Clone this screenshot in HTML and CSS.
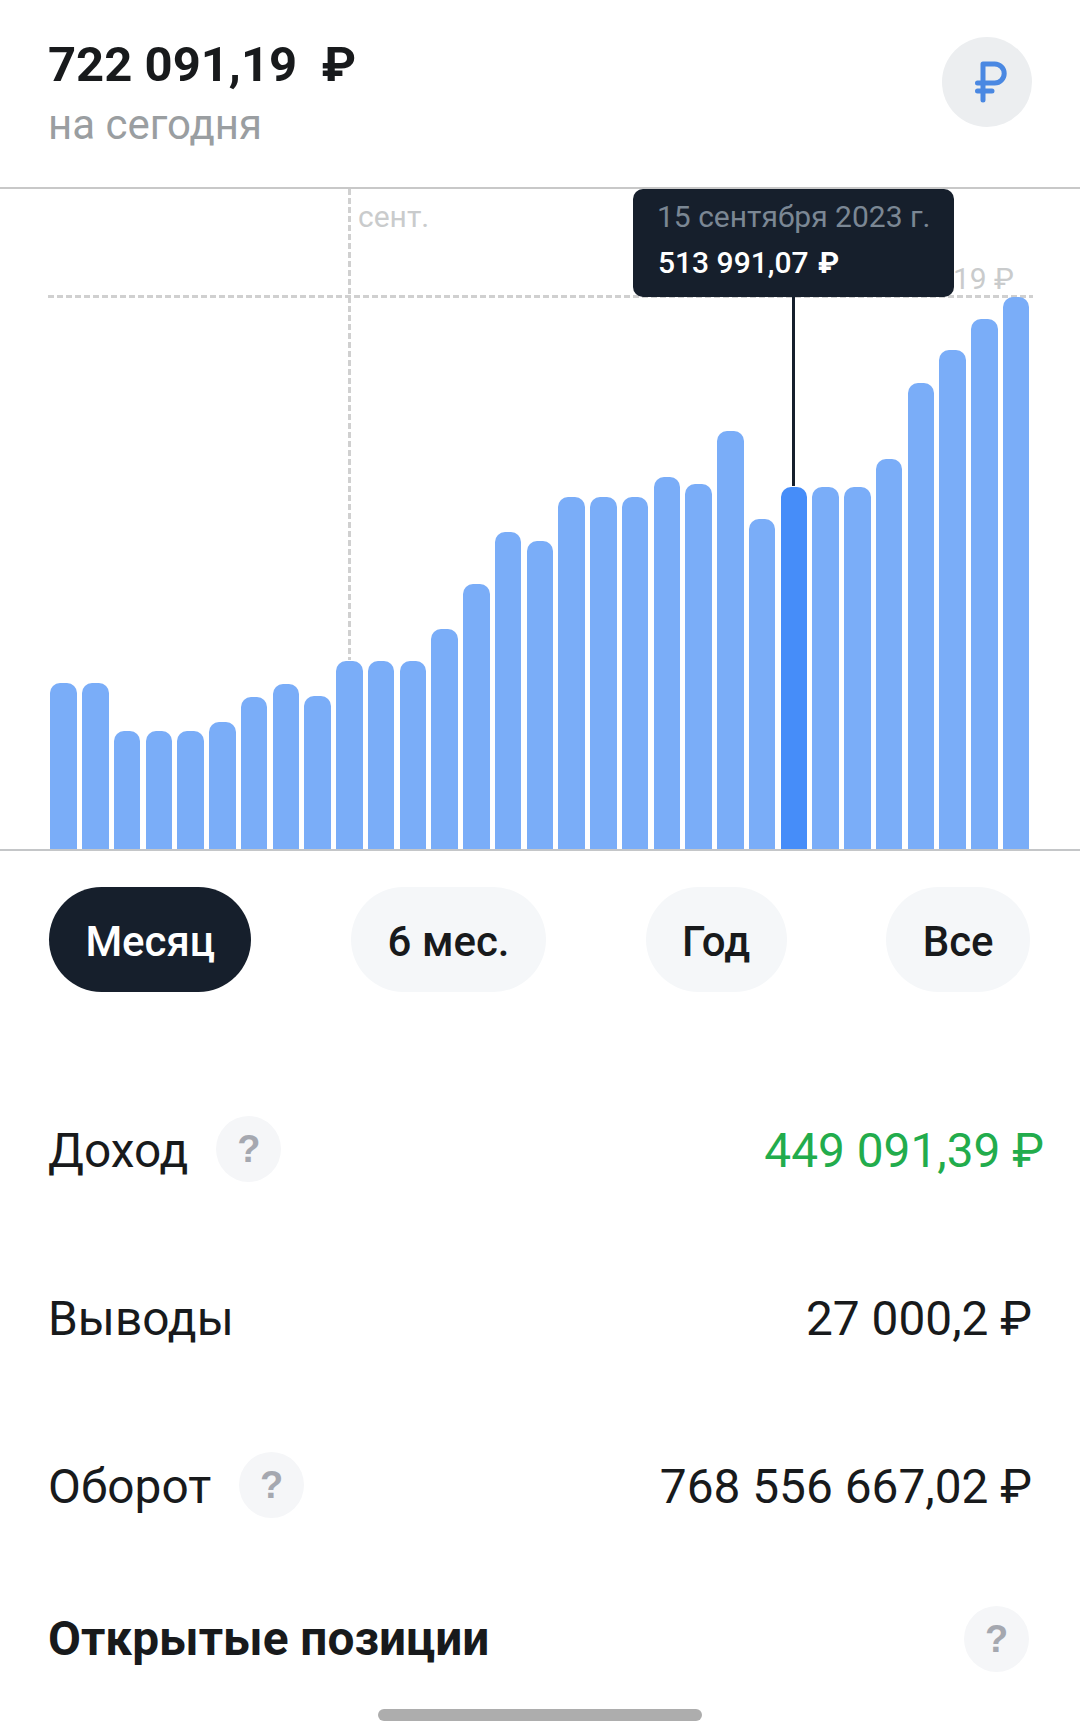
FILE: index.html
```html
<!DOCTYPE html>
<html lang="ru">
<head>
<meta charset="utf-8">
<title>Баланс</title>
<link rel="stylesheet" href="styles.css">
</head>
<body>
<main class="page">
  <header class="head">
    <div class="head-text">
      <div class="total">722 091,19&nbsp; ₽</div>
      <div class="today">на сегодня</div>
    </div>
    <div class="currency">
      <svg class="currency-icon" viewBox="0 0 90 90" width="90" height="90" aria-hidden="true"><path d="M41 63V27H52.7a9.5 9.5 0 0 1 0 19H35.5M35.5 54H50"/></svg>
    </div>
  </header>

  <section class="chart">
    <div class="max-line"></div>
    <div class="max-label">722 091,19 ₽</div>
    <div class="month-line"></div>
    <div class="month-label">сент.</div>
    <div class="pointer"></div>
    <div class="tip">
      <div class="tip-date">15 сентября 2023 г.</div>
      <div class="tip-value">513 991,07 <span class="tip-rub">₽</span></div>
    </div>
    <div class="bars">
      <div class="bar" style="height:166px"></div>
      <div class="bar" style="height:166px"></div>
      <div class="bar" style="height:118px"></div>
      <div class="bar" style="height:118px"></div>
      <div class="bar" style="height:118px"></div>
      <div class="bar" style="height:127px"></div>
      <div class="bar" style="height:152px"></div>
      <div class="bar" style="height:165px"></div>
      <div class="bar" style="height:153px"></div>
      <div class="bar" style="height:188px"></div>
      <div class="bar" style="height:188px"></div>
      <div class="bar" style="height:188px"></div>
      <div class="bar" style="height:220px"></div>
      <div class="bar" style="height:265px"></div>
      <div class="bar" style="height:317px"></div>
      <div class="bar" style="height:308px"></div>
      <div class="bar" style="height:352px"></div>
      <div class="bar" style="height:352px"></div>
      <div class="bar" style="height:352px"></div>
      <div class="bar" style="height:372px"></div>
      <div class="bar" style="height:365px"></div>
      <div class="bar" style="height:418px"></div>
      <div class="bar" style="height:330px"></div>
      <div class="bar bar-active" style="height:362px"></div>
      <div class="bar" style="height:362px"></div>
      <div class="bar" style="height:362px"></div>
      <div class="bar" style="height:390px"></div>
      <div class="bar" style="height:466px"></div>
      <div class="bar" style="height:499px"></div>
      <div class="bar" style="height:530px"></div>
      <div class="bar" style="height:552px"></div>
    </div>
  </section>

  <nav class="periods">
    <button class="pill pill-active">Месяц</button>
    <button class="pill">6 мес.</button>
    <button class="pill">Год</button>
    <button class="pill">Все</button>
  </nav>

  <section class="stats">
    <div class="row">
      <div class="label">Доход <span class="help help-inline">?</span></div>
      <div class="value value-up">449 091,39 ₽</div>
    </div>
    <div class="row">
      <div class="label">Выводы</div>
      <div class="value">27 000,2 ₽</div>
    </div>
    <div class="row">
      <div class="label">Оборот <span class="help help-inline">?</span></div>
      <div class="value">768 556 667,02 ₽</div>
    </div>
    <div class="row row-title">
      <h2 class="title">Открытые позиции</h2>
      <span class="help">?</span>
    </div>
  </section>

  <div class="grabber"></div>
</main>
</body>
</html>
```
FILE: styles.css
```css
* { box-sizing: border-box; }
html, body { margin: 0; padding: 0; background: #fff; }
body { font-family: Roboto, "Liberation Sans", sans-serif; color: #181a1c; }
.page { position: relative; width: 1080px; height: 1736px; overflow: hidden; }

.head {
  height: 187px;
  padding: 37px 48px 0 48px;
  display: flex;
  justify-content: space-between;
  align-items: flex-start;
}
.total { font-size: 49px; font-weight: 700; line-height: 56px; white-space: nowrap; }
.today { font-size: 42px; color: #9a9ea1; line-height: 50px; margin-top: 7px; }
.currency { width: 90px; height: 90px; border-radius: 50%; background: #eceef0; }
.currency-icon { display: block; fill: none; stroke: #4a88e2; stroke-width: 5; stroke-linecap: round; stroke-linejoin: round; }

.chart {
  position: relative;
  height: 664px;
  border-top: 2px solid #c8c8c8;
  border-bottom: 2px solid #c4c6c8;
  padding-left: 50.4px;
  display: flex;
  align-items: flex-end;
}
.bars { display: flex; align-items: flex-end; gap: 5.25px; position: relative; }
.bar { width: 26.5px; background: #7aadf8; border-radius: 10px 10px 0 0; }
.bar-active { background: #468df9; }

.max-line {
  position: absolute; left: 48px; width: 985px; top: 106px; height: 3px;
  background: repeating-linear-gradient(90deg, #d0d0d0 0 6px, transparent 6px 9px);
}
.max-label { position: absolute; right: 66px; top: 73px; font-size: 30px; line-height: 34px; color: #c9cbcc; white-space: nowrap; }
.month-line {
  position: absolute; left: 348px; top: 0; height: 471px; width: 3px;
  background: repeating-linear-gradient(180deg, #d0d0d0 0 6px, transparent 6px 9px);
}
.month-label { position: absolute; left: 358px; top: 11px; font-size: 30px; line-height: 34px; color: #c9cbcc; }
.pointer { position: absolute; left: 792px; top: 107px; height: 190px; width: 3px; background: #161f2c; z-index: 2; }
.tip {
  position: absolute;
  left: 633px; top: 0;
  width: 321px; height: 108px;
  padding: 10px 0 0 25px;
  background: #161f2c;
  border-radius: 10px;
  z-index: 3;
}
.tip-date { font-size: 30px; line-height: 36px; color: #7b8794; white-space: nowrap; margin-left: -1px; }
.tip-value { font-size: 30px; line-height: 36px; font-weight: 500; color: #fff; margin-top: 10px; white-space: nowrap; }
.tip-rub { font-weight: 700; margin-left: 2px; }

.periods {
  display: flex;
  justify-content: space-between;
  padding: 36px 50px 0 49px;
}
.pill {
  height: 105px;
  padding: 3px 36.4px 0;
  border: 0;
  border-radius: 53px;
  background: #f5f7f9;
  color: #181a1c;
  font-family: inherit;
  font-size: 42px;
  font-weight: 500;
}
.pill-active { background: #161f2c; color: #fff; }

.stats { padding: 75px 48px 0 48px; }
.row {
  height: 168px;
  display: flex;
  justify-content: space-between;
  align-items: center;
}
.label { font-size: 47.8px; display: flex; align-items: center; gap: 28px; }
.value { font-size: 47.8px; white-space: nowrap; }
.value-up { color: #22ac4c; margin-right: -12px; }
.row-title { margin-top: -16px; padding-right: 3px; }
.title { margin: 0; font-size: 47.8px; font-weight: 700; }
.help {
  width: 65px; height: 66px;
  border-radius: 50%;
  background: #f5f6f8;
  color: #a5a8b0;
  font-family: "Liberation Sans", Arial, sans-serif;
  font-size: 38px;
  font-weight: 700;
  display: flex;
  align-items: center;
  justify-content: center;
}
.help-inline { margin-top: -4px; }
.grabber { position: absolute; left: 378px; top: 1709px; width: 324px; height: 12px; border-radius: 6px; background: #adadad; }
```
